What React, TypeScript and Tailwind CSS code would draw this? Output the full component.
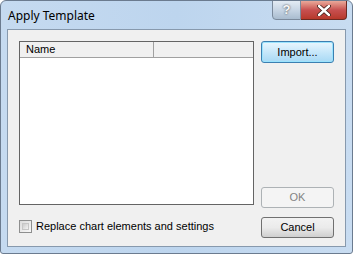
export default function App() {
  const btn =
    "w-[73px] h-[21px] rounded-[3px] border border-[#707070] bg-gradient-to-b from-[#f2f2f2] via-[#ebebeb] to-[#cfcfcf] text-[11px] text-black flex items-center justify-center"
  return (
    <div
      className="w-[353px] h-[254px] relative overflow-hidden rounded-t-[6px] rounded-b-[3px] border border-[#6b7b8f] bg-gradient-to-r from-[#c5daf0] via-[#bdd5ee] to-[#c8dcf1]"
      style={{ fontFamily: "'Liberation Sans', Arial, sans-serif" }}
    >
      {/* title bar */}
      <div className="h-[28px] flex items-start justify-between pl-[7px]">
        <div className="pt-[6px] text-[12px] text-black" style={{ fontFamily: "'Segoe UI', 'Noto Sans', sans-serif" }}>
          Apply Template
        </div>
        <div className="flex mr-[5px] -mt-px">
          <div className="w-[29px] h-[20px] rounded-bl-[4px] border border-[#7b8a9c] bg-gradient-to-b from-[#e3ebf4] via-[#c7d5e4] to-[#a9bccf] flex items-center justify-center text-[13px] font-bold text-[#f8f8f8] [text-shadow:0_0_2px_#333]">
            ?
          </div>
          <div className="w-[46px] h-[20px] rounded-br-[4px] border border-l-0 border-[#6b2a22] bg-gradient-to-b from-[#e9a99a] via-[#c75050] to-[#b7382a] flex items-center justify-center">
            <svg width="14" height="11" viewBox="0 0 14 11">
              <path d="M2 1 L12 10 M12 1 L2 10" stroke="#3a1a14" strokeWidth="4" strokeLinecap="round" />
              <path d="M2 1 L12 10 M12 1 L2 10" stroke="#fff" strokeWidth="2.4" strokeLinecap="round" />
            </svg>
          </div>
        </div>
      </div>
      {/* client area */}
      <div className="mx-[6px] h-[218px] border border-[#8799ad] bg-[#f0f0f0] flex pl-[11px] pt-[11px] pr-[11px]">
        <div className="flex flex-col w-[235px]">
          <div className="h-[164px] border border-[#646464] bg-white">
            <div className="flex h-[16px] border-b border-[#a0a0a0] bg-[#f0f0f0] text-[11px] text-black">
              <div className="w-[134px] border-r border-[#a0a0a0] pl-[6px] leading-[15px]">Name</div>
              <div className="flex-1" />
            </div>
          </div>
          <label className="flex items-center mt-[13px] gap-[4px] text-[11px] text-black">
            <span className="w-[13px] h-[13px] border border-[#8e8f8f] bg-gradient-to-br from-[#dcdcdc] to-[#f8f8f8] p-[2px]">
              <span className="block w-full h-full border border-[#c6c6c6] bg-gradient-to-br from-[#cbcbcb] to-[#f4f4f4]" />
            </span>
            Replace chart elements and settings
          </label>
        </div>
        <div className="flex flex-col ml-[7px]">
          <div className="w-[73px] h-[22px] rounded-[3px] border border-[#3c7fb1] bg-gradient-to-b from-[#eaf6fd] via-[#c7e7fa] to-[#a7d9f5] shadow-[inset_0_0_0_1px_#9be3fd] text-[11px] text-black flex items-center justify-center">
            Import...
          </div>
          <div className="w-[73px] h-[21px] mt-[124px] rounded-[3px] border border-[#adb2b5] bg-[#f4f4f4] text-[11px] text-[#838383] flex items-center justify-center">
            OK
          </div>
          <div className={btn + " mt-[9px]"}>Cancel</div>
        </div>
      </div>
    </div>
  )
}
